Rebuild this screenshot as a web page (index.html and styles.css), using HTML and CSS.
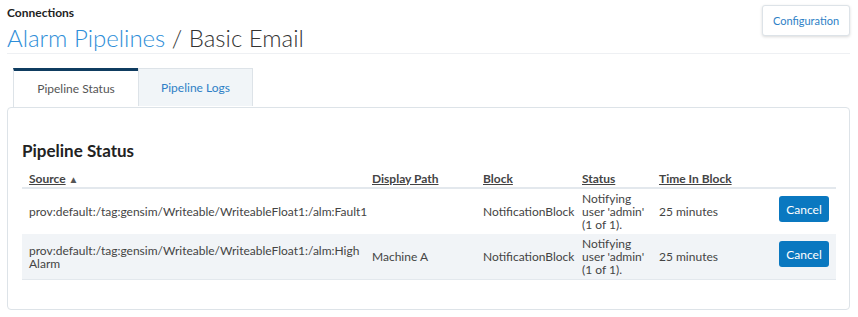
FILE: index.html
```html
<!DOCTYPE html>
<html>
<head>
    <meta charset="utf-8">
    <title>Alarm Pipelines / Basic Email</title>
    <link rel="stylesheet" href="styles.css">
</head>
<body>
  <div class="page">
    <div class="top">
      <div class="crumbs">
        <div class="section">Connections</div>
        <h1 class="title"><span class="link">Alarm Pipelines</span> / Basic Email</h1>
      </div>
      <button class="config">Configuration</button>
    </div>

    <div class="tabs">
      <div class="tab active">Pipeline Status</div>
      <div class="tab">Pipeline Logs</div>
    </div>

    <div class="panel">
      <h2 class="heading">Pipeline Status</h2>
      <table class="grid">
        <colgroup>
          <col class="c-source">
          <col class="c-path">
          <col class="c-block">
          <col class="c-status">
          <col class="c-time">
          <col class="c-action">
        </colgroup>
        <thead>
          <tr>
            <th><a>Source</a> <span class="sort">&#9650;</span></th>
            <th><a>Display Path</a></th>
            <th><a>Block</a></th>
            <th><a>Status</a></th>
            <th><a>Time In Block</a></th>
            <th></th>
          </tr>
        </thead>
        <tbody>
          <tr>
            <td>prov:default:/tag:gensim/Writeable/WriteableFloat1:/alm:Fault1</td>
            <td></td>
            <td>NotificationBlock</td>
            <td class="status">Notifying user 'admin' (1 of 1).</td>
            <td>25 minutes</td>
            <td class="act"><button class="cancel">Cancel</button></td>
          </tr>
          <tr class="alt">
            <td>prov:default:/tag:gensim/Writeable/WriteableFloat1:/alm:High Alarm</td>
            <td>Machine A</td>
            <td>NotificationBlock</td>
            <td class="status">Notifying user 'admin' (1 of 1).</td>
            <td>25 minutes</td>
            <td class="act"><button class="cancel">Cancel</button></td>
          </tr>
        </tbody>
      </table>
    </div>
  </div>
</body>
</html>
```

FILE: styles.css
```css
body {
  margin: 0;
  background: #fafafa;
  font-family: Lato, "Liberation Sans", sans-serif;
  color: #444;
}

.page {
  background: #fff;
  padding: 5px 8px 8px 7px;
}

.top {
  display: flex;
  justify-content: space-between;
  align-items: flex-start;
  border-bottom: 1px solid #eef0f3;
  padding-bottom: 2px;
}

.section {
  font-size: 12px;
  font-weight: bold;
  color: #222;
  margin-top: 0;
}

.title {
  margin: 5px 0 0;
  font-size: 24px;
  font-weight: 300;
  color: #333;
  line-height: 26px;
}

.title .link {
  color: #2e8ed8;
}

.config {
  width: 88px;
  height: 31px;
  background: #fff;
  border: 1px solid #dde3e8;
  border-radius: 3px;
  box-shadow: 0 1px 3px rgba(0, 0, 0, 0.15);
  font-family: inherit;
  font-size: 11px;
  color: #2e7fc6;
}

.tabs {
  display: flex;
  margin: 14px 0 0 6px;
  position: relative;
  z-index: 1;
}

.tab {
  height: 38px;
  line-height: 38px;
  font-size: 12px;
  text-align: center;
  box-sizing: border-box;
  border: 1px solid #dde3e8;
  border-bottom: none;
  background: #f1f5f8;
  color: #2e7fc6;
  width: 115px;
}

.tab.active {
  width: 125px;
  background: #fff;
  color: #555;
  border-top: 3px solid #0f3c60;
  border-right: none;
  height: 39px;
  line-height: 35px;
}

.panel {
  border: 1px solid #dde3e8;
  border-radius: 4px;
  padding: 32px 13px 29px 14px;
  background: #fff;
}

.heading {
  margin: 0 0 9px;
  font-size: 17px;
  font-weight: bold;
  color: #222;
}

.grid {
  width: 100%;
  border-collapse: collapse;
  table-layout: fixed;
  font-size: 12px;
}

.c-source { width: 343px; }
.c-path { width: 111px; }
.c-block { width: 99px; }
.c-status { width: 77px; }
.c-time { width: 120px; }

.grid th {
  text-align: left;
  font-weight: bold;
  padding: 0 7px 1px;
  height: 16px;
  border-bottom: 2px solid #e3e8ed;
  color: #444;
}

.grid th a {
  text-decoration: underline;
}

.sort {
  font-size: 10px;
  color: #555;
}

.grid td {
  padding: 0 7px;
  height: 45px;
  line-height: 13px;
  vertical-align: middle;
}

.grid td.status {
  padding: 0 4px 0 7px;
}

.grid td.act {
  text-align: right;
  height: 40px;
  padding-bottom: 5px;
}

.grid tr.alt td {
  background: #f1f4f7;
  border-bottom: 1px solid #e3e8ed;
}

.cancel {
  width: 50px;
  height: 26px;
  border: none;
  border-radius: 3px;
  background: #0a78c0;
  color: #fff;
  font-family: inherit;
  font-size: 12px;
}
```
